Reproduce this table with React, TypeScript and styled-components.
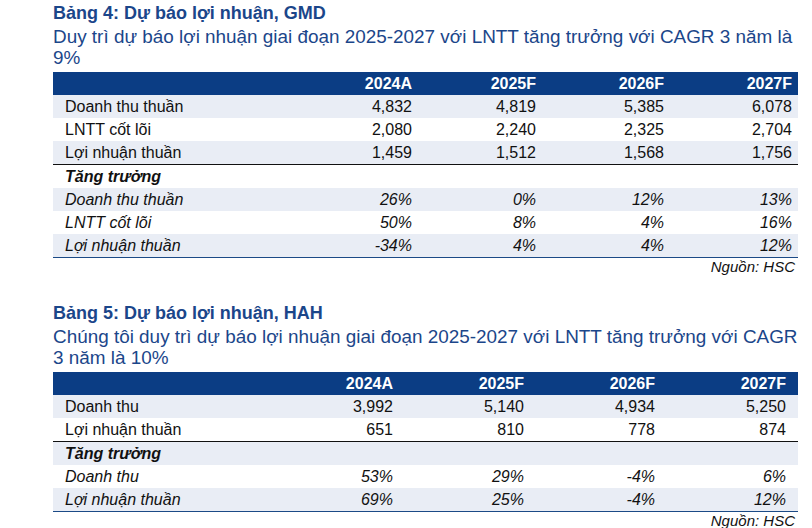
import React from "react";
import styled, { createGlobalStyle } from "styled-components";

type Row = {
  label: string;
  values: string[];
  italic?: boolean;
  heading?: boolean;
  ruleBelow?: boolean;
};

type TableProps = {
  title: string;
  subtitle: string;
  years: string[];
  rows: Row[];
  columns: string;
  trail: number;
};

const GlobalStyle = createGlobalStyle`
  html, body {
    margin: 0;
    padding: 0;
    background: #ffffff;
  }
  body {
    font-family: "Liberation Sans", Arial, sans-serif;
  }
`;

const Page = styled.div`
  width: 745px;
  padding: 3px 0 0 53px;
  display: flex;
  flex-direction: column;
  gap: 29px;
`;

const Exhibit = styled.section`
  display: flex;
  flex-direction: column;
`;

const Title = styled.h2`
  margin: 0;
  font-size: 18px;
  line-height: 21px;
  font-weight: bold;
  color: #1b468a;
`;

const Subtitle = styled.p`
  margin: 2px 0 4px;
  font-size: 18.9px;
  line-height: 21px;
  color: #1b468a;
`;

const Grid = styled.div<{ $columns: string; $trail: number }>`
  display: grid;
  grid-template-columns: ${(p) => p.$columns};
  padding-right: ${(p) => p.$trail}px;
  font-size: 16px;
  line-height: 23px;
  color: #111111;
`;

const Header = styled(Grid)`
  background: #0b3d84;
  color: #ffffff;
  font-weight: bold;
  height: 23px;
`;

const BodyRow = styled(Grid)<{ $shade: boolean; $rule?: boolean; $italic?: boolean }>`
  background: ${(p) => (p.$shade ? "#e9edf5" : "#ffffff")};
  font-style: ${(p) => (p.$italic ? "italic" : "normal")};
  height: 23px;
  border-bottom: ${(p) => (p.$rule ? "1px solid #111111" : "none")};
`;

const Label = styled.div<{ $heading?: boolean }>`
  padding-left: 12px;
  font-weight: ${(p) => (p.$heading ? "bold" : "normal")};
  white-space: nowrap;
`;

const Value = styled.div`
  text-align: right;
  padding-right: 6px;
`;

const BottomRule = styled.div`
  height: 1px;
  background: #1b4a86;
`;

const Source = styled.div`
  text-align: right;
  padding: 1px 3px 0 0;
  font-size: 15px;
  line-height: 15px;
  font-style: italic;
  color: #111111;
`;

const ForecastTable = ({ title, subtitle, years, rows, columns, trail }: TableProps) => (
  <Exhibit>
    <Title>{title}</Title>
    <Subtitle>{subtitle}</Subtitle>
    <Header $columns={columns} $trail={trail}>
      <Label />
      {years.map((y) => (
        <Value key={y}>{y}</Value>
      ))}
    </Header>
    {rows.map((r, i) => (
      <BodyRow
        key={r.label + i}
        $columns={columns}
        $trail={trail}
        $shade={i % 2 === 0}
        $rule={r.ruleBelow}
        $italic={r.italic}
      >
        <Label $heading={r.heading}>{r.label}</Label>
        {r.values.map((v, j) => (
          <Value key={j}>{v}</Value>
        ))}
      </BodyRow>
    ))}
    <BottomRule />
    <Source>Nguồn: HSC</Source>
  </Exhibit>
);

const years = ["2024A", "2025F", "2026F", "2027F"];

const gmdRows: Row[] = [
  { label: "Doanh thu thuần", values: ["4,832", "4,819", "5,385", "6,078"] },
  { label: "LNTT cốt lõi", values: ["2,080", "2,240", "2,325", "2,704"] },
  { label: "Lợi nhuận thuần", values: ["1,459", "1,512", "1,568", "1,756"], ruleBelow: true },
  { label: "Tăng trưởng", values: [], italic: true, heading: true },
  { label: "Doanh thu thuần", values: ["26%", "0%", "12%", "13%"], italic: true },
  { label: "LNTT cốt lõi", values: ["50%", "8%", "4%", "16%"], italic: true },
  { label: "Lợi nhuận thuần", values: ["-34%", "4%", "4%", "12%"], italic: true },
];

const hahRows: Row[] = [
  { label: "Doanh thu", values: ["3,992", "5,140", "4,934", "5,250"] },
  { label: "Lợi nhuận thuần", values: ["651", "810", "778", "874"], ruleBelow: true },
  { label: "Tăng trưởng", values: [], italic: true, heading: true },
  { label: "Doanh thu", values: ["53%", "29%", "-4%", "6%"], italic: true },
  { label: "Lợi nhuận thuần", values: ["69%", "25%", "-4%", "12%"], italic: true },
];

export default function App() {
  return (
    <>
      <GlobalStyle />
      <Page>
        <ForecastTable
          title="Bảng 4: Dự báo lợi nhuận, GMD"
          subtitle="Duy trì dự báo lợi nhuận giai đoạn 2025-2027 với LNTT tăng trưởng với CAGR 3 năm là 9%"
          years={years}
          rows={gmdRows}
          columns="1fr 124px 124px 128px 128px"
          trail={0}
        />
        <ForecastTable
          title="Bảng 5: Dự báo lợi nhuận, HAH"
          subtitle="Chúng tôi duy trì dự báo lợi nhuận giai đoạn 2025-2027 với LNTT tăng trưởng với CAGR 3 năm là 10%"
          years={years}
          rows={hahRows}
          columns="1fr 129px 131px 131px 131px"
          trail={6}
        />
      </Page>
    </>
  );
}
